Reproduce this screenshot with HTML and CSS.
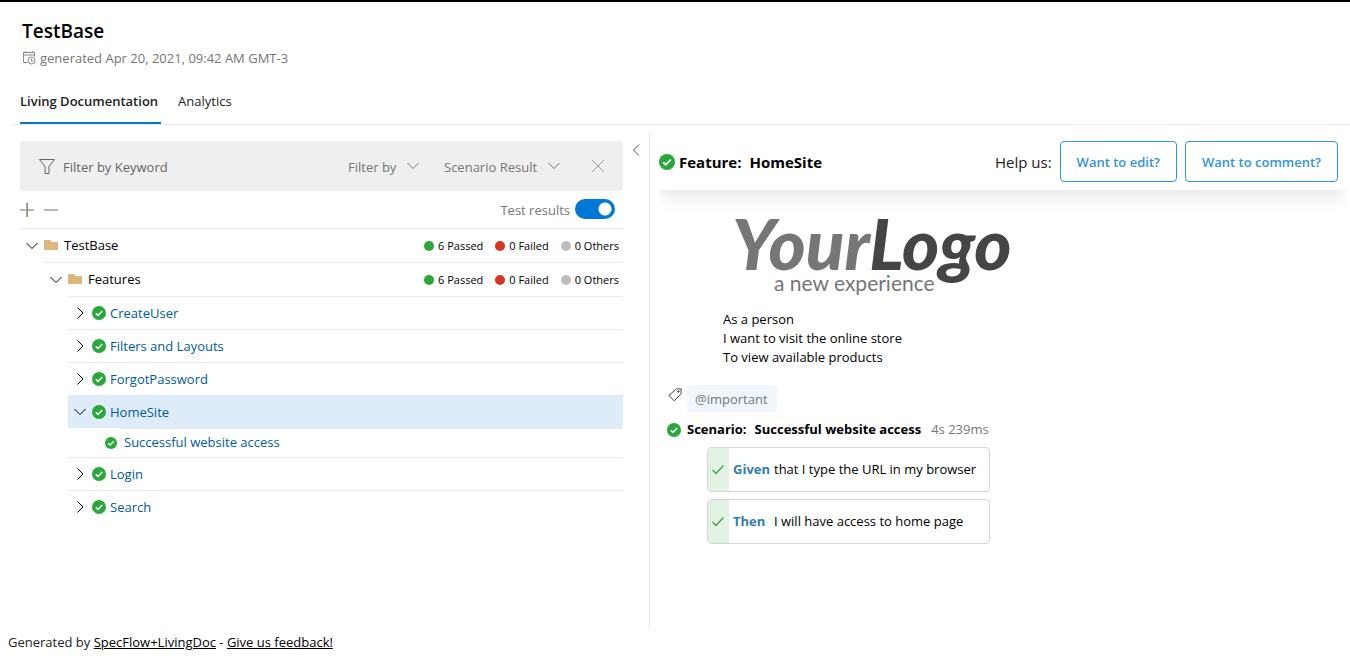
FILE: index.html
```html
<!DOCTYPE html>
<html lang="en">
<head>
<meta charset="utf-8">
<title>TestBase</title>
<link rel="stylesheet" href="styles.css">
</head>
<body>
<svg class="defs" width="0" height="0" aria-hidden="true">
  <symbol id="check" viewBox="0 0 16 16"><circle cx="8" cy="8" r="8" fill="#28a838"/><path d="M4.300 8.300l2.500 2.400 5-5" fill="none" stroke="#fff" stroke-width="1.700"/></symbol>
  <symbol id="down" viewBox="0 0 12 12"><path d="M.5 3L6 8.500 11.500 3" fill="none" stroke="currentColor"/></symbol>
  <symbol id="right" viewBox="0 0 12 12"><path d="M3.500 .5L9 6 3.500 11.500" fill="none" stroke="currentColor"/></symbol>
  <symbol id="folder" viewBox="0 0 14 12"><path d="M0 0h6l2 2H14v8H0z" fill="#dcb67a"/></symbol>
  <symbol id="tick" viewBox="0 0 12 12"><path d="M.5 6L4 9.500l7.500-8" fill="none" stroke="#41a648" stroke-width="1.500"/></symbol>
</svg>
<header class="page-header">
  <h1 class="title">TestBase</h1>
  <p class="generated">
    <svg width="14" height="14" viewBox="0 0 14 14" fill="none" stroke="#8a8a8a"><path d="M5.500 11.500h-4v-10h11v4M1.500 4h11M3.500 0v2M10.500 0v2"/><circle cx="9.500" cy="9.500" r="3.500"/><path d="M9.500 7.500v2.500h2"/></svg>
    generated Apr 20, 2021, 09:42 AM GMT-3
  </p>
</header>
<nav class="tabs">
  <a class="tab tab-active" href="#doc">Living Documentation</a>
  <a class="tab" href="#analytics">Analytics</a>
</nav>
<main class="content">
  <section class="side">
    <div class="side-body">
      <form class="filter">
        <label class="keyword">
          <svg width="16" height="15" viewBox="0 0 16 15" fill="none" stroke="#666"><path d="M.5.5h15L10 7.500v7H6v-7z"/></svg>
          <input class="keyword-input" type="text" placeholder="Filter by Keyword" aria-label="Filter by Keyword">
        </label>
        <label class="drop">
          <select class="drop-select" aria-label="Filter by"><option>Filter by</option></select>
          <svg width="12" height="12"><use href="#down"/></svg>
        </label>
        <label class="drop">
          <select class="drop-select" aria-label="Scenario Result"><option>Scenario Result</option></select>
          <svg width="12" height="12"><use href="#down"/></svg>
        </label>
        <button class="icon-button clear" type="button" aria-label="Clear filter"><svg width="14" height="14" viewBox="0 0 14 14" stroke="#999"><path d="M1 1l12 12M13 1L1 13"/></svg></button>
      </form>
      <div class="tools">
        <button class="icon-button" type="button" aria-label="Expand all"><svg width="14" height="14" viewBox="0 0 14 14" fill="none"><path d="M0 7h14" stroke="#b8b8b8" stroke-width="2"/><path d="M6.500 0v14" stroke="#e0a04c"/><path d="M7.500 0v14" stroke="#5a93b8"/></svg></button>
        <button class="icon-button" type="button" aria-label="Collapse all"><svg width="14" height="14" viewBox="0 0 14 14"><path d="M0 7h14" stroke="#b8b8b8" stroke-width="2"/></svg></button>
        <label class="results" for="results">Test results</label>
        <input class="switch" id="results" type="checkbox" role="switch" checked>
      </div>
      <ul class="tree">
        <li>
          <div class="row folder-row"><svg width="12" height="12"><use href="#down"/></svg><svg class="folder" width="14" height="12"><use href="#folder"/></svg><span class="name">TestBase</span>
            <span class="stat passed">6 Passed</span><span class="stat failed">0 Failed</span><span class="stat others">0 Others</span></div>
          <ul class="branch">
            <li>
              <div class="row folder-row"><svg width="12" height="12"><use href="#down"/></svg><svg class="folder" width="14" height="12"><use href="#folder"/></svg><span class="name">Features</span>
                <span class="stat passed">6 Passed</span><span class="stat failed">0 Failed</span><span class="stat others">0 Others</span></div>
              <ul class="branch">
                <li class="row"><svg width="12" height="12"><use href="#right"/></svg><svg class="state" width="14" height="14"><use href="#check"/></svg><a class="link" href="#CreateUser">CreateUser</a></li>
                <li class="row"><svg width="12" height="12"><use href="#right"/></svg><svg class="state" width="14" height="14"><use href="#check"/></svg><a class="link" href="#Filters">Filters and Layouts</a></li>
                <li class="row"><svg width="12" height="12"><use href="#right"/></svg><svg class="state" width="14" height="14"><use href="#check"/></svg><a class="link" href="#ForgotPassword">ForgotPassword</a></li>
                <li>
                  <div class="row row-selected"><svg width="12" height="12"><use href="#down"/></svg><svg class="state" width="14" height="14"><use href="#check"/></svg><a class="link" href="#HomeSite">HomeSite</a></div>
                  <ul class="leaves"><li class="leaf"><svg width="12" height="12"><use href="#check"/></svg><a class="link" href="#access">Successful website access</a></li></ul>
                </li>
                <li class="row"><svg width="12" height="12"><use href="#right"/></svg><svg class="state" width="14" height="14"><use href="#check"/></svg><a class="link" href="#Login">Login</a></li>
                <li class="row"><svg width="12" height="12"><use href="#right"/></svg><svg class="state" width="14" height="14"><use href="#check"/></svg><a class="link" href="#Search">Search</a></li>
              </ul>
            </li>
          </ul>
        </li>
      </ul>
    </div>
    <button class="icon-button collapse" type="button" aria-label="Collapse panel"><svg width="8" height="12" viewBox="0 0 8 12" fill="none" stroke="#5c4a66"><path d="M7 .5L1.500 6 7 11.500"/></svg></button>
  </section>
  <article class="detail">
    <div class="feature-bar">
      <svg width="16" height="16"><use href="#check"/></svg>
      <h2 class="feature-title"><span>Feature:</span><span>HomeSite</span></h2>
      <span class="help">Help us:</span>
      <button class="outline-button" type="button">Want to edit?</button>
      <button class="outline-button" type="button">Want to comment?</button>
    </div>
    <div class="brand">
      <div class="brand-name"><span>Your</span><span class="brand-dark">Logo</span></div>
      <div class="brand-line">a new experience</div>
    </div>
    <p class="story">As a person<br>I want to visit the online store<br>To view available products</p>
    <div class="tags">
      <svg width="14" height="14" viewBox="0 0 14 14" fill="none" stroke="#444"><path d="M8.500.8l4.700.2-.2 4.800-6.700 7L.8 7.500z"/><circle cx="10.500" cy="3.500" r=".7" fill="#444"/></svg>
      <span class="tag">@important</span>
    </div>
    <div class="scenario">
      <svg width="14" height="14"><use href="#check"/></svg>
      <h3 class="scenario-title"><span>Scenario:</span><span>Successful website access</span></h3>
      <span class="time">4s 239ms</span>
    </div>
    <ol class="steps">
      <li class="step"><span class="step-state"><svg width="12" height="12"><use href="#tick"/></svg></span><b class="keyword-name">Given</b><span>that I type the URL in my browser</span></li>
      <li class="step"><span class="step-state"><svg width="12" height="12"><use href="#tick"/></svg></span><b class="keyword-name">Then</b><span>I will have access to home page</span></li>
    </ol>
  </article>
</main>
<footer class="footer">Generated by <a class="footer-link" href="#specflow">SpecFlow+LivingDoc</a> - <a class="footer-link" href="#feedback">Give us feedback!</a></footer>
</body>
</html>
```
FILE: styles.css
```css
* { box-sizing: border-box; }
body {
  margin: 0;
  min-height: 100vh;
  display: flex;
  flex-direction: column;
  border-top: 2px solid #000;
  font: 13px/19px "Open Sans", "Noto Sans", sans-serif;
  color: #000;
  background: #fff;
}
h1, h2, h3, p, ul, ol { margin: 0; padding: 0; }
ul, ol { list-style: none; }
svg { flex: none; display: block; }
input, select, button { font: inherit; }
.defs { position: absolute; }
.icon-button { padding: 0; border: 0; background: none; }

.page-header { padding: 16px 22px 0; }
.title { font-size: 19px; line-height: 26px; font-weight: 600; }
.generated { display: flex; align-items: center; gap: 4px; margin-top: 4px; line-height: 20px; color: #767676; }

.tabs { display: flex; gap: 17px; margin: 11px 0 0 12px; padding-left: 8px; border-bottom: 1px solid #eaeaea; }
.tab { height: 45px; padding: 13px 0 0; color: #222; text-decoration: none; }
.tab-active { padding-right: 3px; font-weight: 600; border-bottom: 2px solid #0078d4; }

.content { flex: 1; display: grid; grid-template-columns: 13fr 14fr; padding-top: 8px; }
.side { display: flex; align-items: flex-start; gap: 9px; padding: 8px 9px 0 20px; border-right: 1px solid #eaeaea; }
.side-body { flex: 1; }
.collapse { margin-top: 3px; }

.filter { display: flex; align-items: center; height: 50px; padding: 0 18px 0 19px; border-radius: 4px; background: #efefef; color: #767676; }
.keyword { flex: 1; display: flex; align-items: center; gap: 8px; }
.keyword-input { width: 160px; padding: 2px 0 0; border: 0; background: none; color: #666; }
.keyword-input::placeholder { color: #666; opacity: 1; }
.drop { display: flex; align-items: center; gap: 10px; margin-right: 25px; }
.drop-select { appearance: none; padding: 2px 0 0; border: 0; background: none; color: #767676; }
.clear { margin-left: 6px; }

.tools { display: flex; align-items: center; gap: 10px; height: 37px; padding: 1px 8px 0 0; }
.results { margin: 0 -5px 0 auto; color: #767676; }
.switch { appearance: none; width: 40px; height: 20px; margin: 0 0 2px; border-radius: 10px; background: radial-gradient(circle at 30px 10px, #fff 6px, #0078d7 7px); }

.branch { padding-left: 24px; }
.row { display: flex; align-items: center; height: 33px; padding-left: 6px; border-top: 1px solid #eaeaea; }
.folder-row { height: 34px; padding-right: 4px; }
.row-selected { background: #deecf9; border-color: #deecf9; }
.folder { margin: 0 6px; }
.state { margin: 0 4px 0 6px; }
.name { margin-right: auto; }
.link { color: #005a9e; text-decoration: none; }
.stat { display: flex; align-items: center; gap: 4px; margin-left: 12px; font-size: 11px; }
.stat::before { content: ""; width: 10px; height: 10px; border-radius: 50%; background: #bebebe; }
.passed::before { background: #28a838; }
.failed::before { background: #d4351c; }
.leaves { padding-left: 24px; }
.leaf { display: flex; align-items: center; gap: 7px; height: 29px; padding-left: 13px; background: linear-gradient(#eaeaea, #eaeaea) 28px 0 / 100% 1px no-repeat; }

.detail { padding: 0 4px 0 9px; }
.feature-bar { display: flex; align-items: center; height: 57px; padding-right: 8px; box-shadow: 0 10px 16px -2px #e8e8e8; clip-path: inset(0 0 -28px 0); }
.feature-title { display: flex; gap: 8px; margin: 0 auto 0 4px; padding-top: 1px; font-size: 15px; font-weight: 700; }
.help { padding-top: 1px; font-size: 15px; color: #222; }
.outline-button { height: 41px; margin-left: 8px; padding: 1px 16px 0; border: 1px solid #3394dc; border-radius: 4px; background: #fff; color: #3394dc; font-weight: 600; }

.brand { margin: 26px 0 0 73px; font-family: Lato, sans-serif; color: #757776; }
.brand-name { font-size: 71px; line-height: 54px; font-weight: 900; font-style: italic; }
.brand-dark { color: #454545; }
.brand-line { padding-left: 42px; font-size: 21px; line-height: 26px; }
.story { margin: 14px 0 0 64px; }
.tags { display: flex; gap: 5px; margin: 18px 0 0 9px; }
.tags svg { margin-top: 3px; }
.tag { padding: 5px 9px 3px 8px; border-radius: 4px; background: #eff6fc; color: #767676; }
.scenario { display: flex; align-items: center; gap: 6px; margin: 8px 0 0 8px; }
.scenario-title { display: flex; gap: 8px; font-size: 13px; font-weight: 700; }
.time { margin-left: 4px; color: #767676; }
.steps { display: grid; gap: 7px; width: max-content; margin: 8px 0 0 48px; }
.step { display: flex; align-items: center; height: 45px; padding-right: 13px; border: 1px solid #d6d6d6; border-radius: 4px; }
.step-state { display: flex; align-items: center; align-self: stretch; margin-right: 4px; padding: 0 5px 0 4px; background: #e2f3e4; }
.keyword-name { min-width: 37px; margin-right: 4px; color: #2f7eb0; }

.footer { padding: 4px 8px 7px; color: #222; }
.footer-link { color: #000; }
```
